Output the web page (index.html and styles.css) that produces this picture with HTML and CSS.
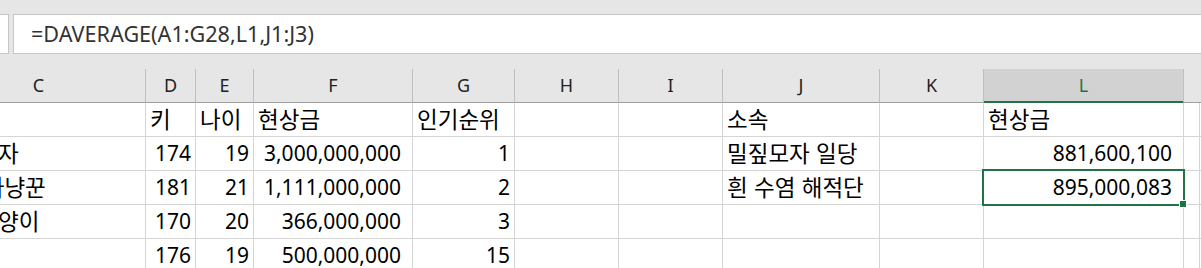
FILE: index.html
```html
<!DOCTYPE html>
<html lang="ko">

<head>
    <meta charset="UTF-8">
    <meta name="viewport" content="width=device-width, initial-scale=1.0">
    <title>DAVERAGE</title>
    <link rel="stylesheet" href="styles.css">
</head>

<body>
    <!-- 수식 입력줄 -->
    <div class="top">
        <div class="name-box"></div>
        <div class="formula">=DAVERAGE(A1:G28,L1,J1:J3)</div>
    </div>

    <!-- 시트 (C열 일부부터 보임) -->
    <div class="sheet">
        <div class="hd">C</div>
        <div class="hd">D</div>
        <div class="hd">E</div>
        <div class="hd">F</div>
        <div class="hd">G</div>
        <div class="hd">H</div>
        <div class="hd">I</div>
        <div class="hd">J</div>
        <div class="hd">K</div>
        <div class="hd sel">L</div>
        <div class="hd last"></div>
        <div class="hd last"></div>

        <div class="c"></div>
        <div class="c ko">키</div>
        <div class="c ko">나이</div>
        <div class="c ko">현상금</div>
        <div class="c ko">인기순위</div>
        <div class="c"></div>
        <div class="c"></div>
        <div class="c ko">소속</div>
        <div class="c"></div>
        <div class="c ko">현상금</div>
        <div class="c"></div>
        <div class="c end"></div>

        <div class="c ko">밀짚모자</div>
        <div class="c num">174</div>
        <div class="c num">19</div>
        <div class="c num acct">3,000,000,000</div>
        <div class="c num">1</div>
        <div class="c"></div>
        <div class="c"></div>
        <div class="c ko">밀짚모자 일당</div>
        <div class="c"></div>
        <div class="c num acct">881,600,100</div>
        <div class="c"></div>
        <div class="c end"></div>

        <div class="c ko">해적 사냥꾼</div>
        <div class="c num">181</div>
        <div class="c num">21</div>
        <div class="c num acct">1,111,000,000</div>
        <div class="c num">2</div>
        <div class="c"></div>
        <div class="c"></div>
        <div class="c ko">흰 수염 해적단</div>
        <div class="c"></div>
        <div class="c num acct active">895,000,083</div>
        <div class="c"></div>
        <div class="c end"></div>

        <div class="c ko">도둑고양이</div>
        <div class="c num">170</div>
        <div class="c num">20</div>
        <div class="c num acct">366,000,000</div>
        <div class="c num">3</div>
        <div class="c"></div>
        <div class="c"></div>
        <div class="c"></div>
        <div class="c"></div>
        <div class="c"></div>
        <div class="c"></div>
        <div class="c end"></div>

        <div class="c"></div>
        <div class="c num">176</div>
        <div class="c num">19</div>
        <div class="c num acct">500,000,000</div>
        <div class="c num">15</div>
        <div class="c"></div>
        <div class="c"></div>
        <div class="c"></div>
        <div class="c"></div>
        <div class="c"></div>
        <div class="c"></div>
        <div class="c end"></div>
    </div>
</body>

</html>
```

FILE: styles.css
```css
body {
    margin: 0;
    background-color: #fff;
    overflow: hidden;
    font-family: "Noto Sans", "Noto Sans CJK KR", sans-serif;
    color: #000;
}

.top {
    display: flex;
    padding: 14px 0 15px;
    background-color: #e6e6e6;
}

.name-box {
    width: 8px;
    height: 38px;
    background-color: #fff;
    border: 1px solid #c6c6c6;
    border-left: 0;
}

.formula {
    flex: 1;
    height: 38px;
    margin-left: 4px;
    padding-left: 17px;
    background-color: #fff;
    border: 1px solid #c6c6c6;
    border-right: 0;
    font-size: 21.6px;
    line-height: 38px;
    color: #333;
}

.sheet {
    display: grid;
    grid-template-columns: 214px 50px 58px 159px 102px 104px 104px 157px 104px 200px 16px 1fr;
    margin-left: -68px;
}

.hd {
    height: 34px;
    box-sizing: border-box;
    background-color: #e6e6e6;
    border-right: 1px solid #bfbfbf;
    border-bottom: 1px solid #a0a0a0;
    text-align: center;
    font-size: 18px;
    line-height: 33px;
    color: #222;
}

.hd.sel {
    background-color: #d2d2d2;
    color: #217346;
    border-bottom-color: #217346;
    box-shadow: inset 0 -1px 0 #217346;
}

.hd.last {
    border-right: 0;
}

.c {
    height: 34px;
    box-sizing: border-box;
    padding: 0 4px;
    border-right: 1px solid #d4d4d4;
    border-bottom: 1px solid #d4d4d4;
    font-size: 21px;
    line-height: 33px;
    white-space: nowrap;
    overflow: hidden;
}

.c.end {
    border-right: 0;
}

.ko {
    font-family: "Noto Sans CJK KR", sans-serif;
    font-size: 22.5px;
    line-height: 31px;
}

.num {
    text-align: right;
}

.acct {
    padding-right: 11px;
}

/* 선택된 셀 테두리 */
.active {
    position: relative;
    overflow: visible;
}

.active::before {
    content: "";
    position: absolute;
    left: -2px;
    top: -2px;
    right: -2px;
    bottom: -2px;
    border: 2px solid #217346;
}

.active::after {
    content: "";
    position: absolute;
    right: -3px;
    bottom: -3px;
    width: 6px;
    height: 6px;
    background-color: #217346;
    box-shadow: 0 0 0 1px #fff;
}
```
